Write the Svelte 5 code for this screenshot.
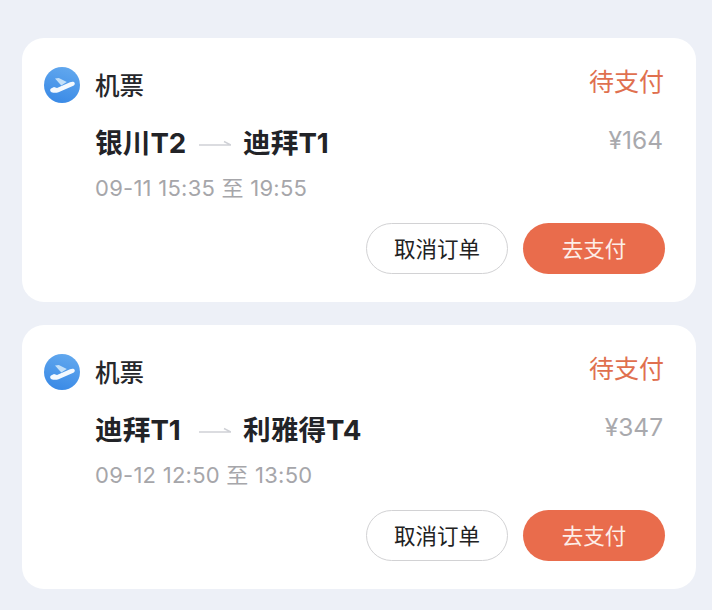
<script>
  const orders = [
    { from: '银川T2', to: '迪拜T1', price: '¥164', time: '09-11 15:35 至 19:55' },
    { from: '迪拜T1', to: '利雅得T4', price: '¥347', time: '09-12 12:50 至 13:50' }
  ];
</script>

<main class="page">
  {#each orders as o}
    <section class="card">
      <header class="head">
        <div class="kind">
          <svg class="logo" viewBox="0 0 36 36" aria-hidden="true">
            <defs>
              <linearGradient id="g" x1="0.7" y1="0" x2="0.4" y2="1">
                <stop offset="0" stop-color="#62a8ee" />
                <stop offset="1" stop-color="#3a8ae6" />
              </linearGradient>
            </defs>
            <circle cx="18" cy="18" r="18" fill="url(#g)" />
            <path d="M11 11.500l3.800-.6 8 4.200-5.500 3.400z" fill="#c3e0f9" />
            <path d="M7.500 25.200c-1.500-.5-1.800-2.800-.5-3.600l3-1.700 3 1.200 13-5.800c2.200-.9 4.200-.6 4.700.6.500 1.300-.7 2.600-2.500 3.400L14.500 25.300c-2.400.7-4.800.7-7-.1z" fill="#f4f9fe" />
          </svg>
          <span class="title">机票</span>
        </div>
        <span class="status">待支付</span>
      </header>
      <div class="route-row">
        <div class="route">
          <span class="city from">{o.from}</span>
          <svg class="arrow" viewBox="0 0 32 6" aria-hidden="true">
            <path d="M0 5h32L25 1.500" fill="none" stroke="#cfd1d6" stroke-width="1.400" />
          </svg>
          <span class="city">{o.to}</span>
        </div>
        <span class="price">{o.price}</span>
      </div>
      <div class="time">{o.time}</div>
      <div class="actions">
        <button class="btn ghost">取消订单</button>
        <button class="btn primary">去支付</button>
      </div>
    </section>
  {/each}
</main>

<style>
  :global(body) {
    margin: 0;
    background: #edf0f7;
  }
  .page {
    width: 712px;
    height: 610px;
    box-sizing: border-box;
    padding: 38px 16px 0 22px;
    display: flex;
    flex-direction: column;
    gap: 23px;
    overflow: hidden;
    font-family: Inter, "Noto Sans CJK SC", sans-serif;
  }
  .card {
    height: 264px;
    box-sizing: border-box;
    background: #fff;
    border-radius: 22px;
    padding: 28px 31px 0 22px;
    display: flex;
    flex-direction: column;
  }
  .head {
    display: flex;
    justify-content: space-between;
    align-items: center;
    height: 37px;
  }
  .kind {
    display: flex;
    align-items: center;
    gap: 15px;
  }
  .logo {
    width: 36px;
    height: 36px;
    display: block;
  }
  .title {
    font-size: 24.500px;
    font-weight: 500;
    color: #26272b;
    margin-bottom: 1px;
  }
  .status {
    font-size: 25px;
    color: #e0704f;
    margin-right: 1px;
    margin-bottom: 10px;
  }
  .route-row {
    margin-top: 20px;
    padding-left: 51px;
    padding-right: 2px;
    display: flex;
    justify-content: space-between;
    align-items: center;
    height: 40px;
  }
  .route {
    display: flex;
    align-items: center;
  }
  .city {
    font-size: 27.700px;
    font-weight: 700;
    color: #222327;
    line-height: 40px;
  }
  .from {
    width: 104px;
  }
  .arrow {
    width: 32px;
    height: 6px;
    margin-right: 12px;
  }
  .price {
    font-size: 24.500px;
    color: #a9a9ad;
    margin-bottom: 6px;
  }
  .time {
    margin-top: 10px;
    padding-left: 51px;
    font-size: 22px;
    letter-spacing: 0.250px;
    line-height: 30px;
    color: #a6a6aa;
  }
  .actions {
    margin-top: 20px;
    display: flex;
    justify-content: flex-end;
    gap: 15px;
  }
  .btn {
    width: 142px;
    height: 51px;
    border-radius: 26px;
    box-sizing: border-box;
    font: inherit;
    font-size: 21.500px;
    padding: 0 0 2px;
  }
  .ghost {
    background: #fff;
    border: 1px solid #d2d2d4;
    color: #222;
  }
  .primary {
    background: #e96c4c;
    border: none;
    color: #fdeee8;
  }
</style>
